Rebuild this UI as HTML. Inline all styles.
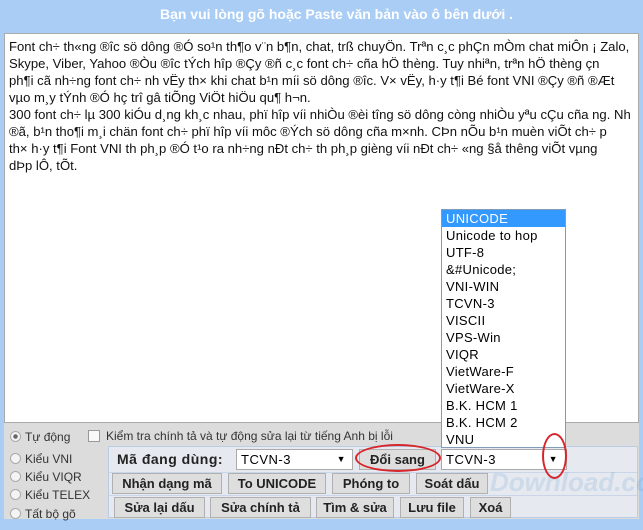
<!DOCTYPE html>
<html><head><meta charset="utf-8"><style>
*{box-sizing:border-box;margin:0;padding:0}
body{width:643px;height:530px;background:#a9cdf5;font-family:"Liberation Sans",Tahoma,sans-serif;position:relative;overflow:hidden}
.hdr{position:absolute;left:0;top:6px;width:643px;text-align:center;color:#fff;font-weight:bold;font-size:14px;padding-left:30px}
.ta{position:absolute;left:4px;top:33px;width:635px;height:390px;background:#fff;border:1px solid #aaa;font-size:13.1px;line-height:17px;padding:4px 4px;color:#111;white-space:nowrap;overflow:hidden}
.gray{position:absolute;left:4px;top:423px;width:635px;height:96px;background:#dcdcdc}
.r{position:absolute;font-size:12px;color:#333}
.rad{display:inline-block;width:11px;height:11px;border:1px solid #aaa;border-radius:50%;background:#f4f4f4;vertical-align:-1px;margin-right:4px}
.panel{position:absolute;left:108px;top:446px;width:530px;height:72px;background:#e6e9ef;border:1px solid #b8cce4}
.line{position:absolute;left:0;width:100%;height:1px;background:#c8d6e8}
.btn{position:absolute;height:21px;background:#dedede;border:1px solid #b0b0b0;font-weight:bold;font-size:13px;text-align:center;line-height:19px;color:#222}
.sel{position:absolute;height:21px;background:#fff;border:1px solid #aaa;font-size:13px;line-height:19px;padding-left:4px;letter-spacing:.5px}
.dd{position:absolute;left:441px;top:209px;width:125px;height:239px;background:#fff;border:1px solid #7f9db9;font-size:13px;letter-spacing:.3px}
.dd div{height:17px;line-height:17px;padding-left:4px}
.ell{position:absolute;border:2px solid #d6262c;border-radius:50%}
</style></head><body>
<div class="hdr">Bạn vui lòng gõ hoặc Paste văn bản vào ô bên dưới .</div>
<div class="ta">Font ch÷ th«ng ®îc sö dông ®Ó so¹n th¶o v¨n b¶n, chat, trß chuyÖn. Trªn c¸c phÇn mÒm chat miÔn ¡ Zalo,<br>Skype, Viber, Yahoo ®Òu ®îc tÝch hîp ®Çy ®ñ c¸c font ch÷ cña hÖ thèng. Tuy nhiªn, trªn hÖ thèng çn<br>ph¶i cã nh÷ng font ch÷ nh vËy th× khi chat b¹n míi sö dông ®îc. V× vËy, h·y t¶i Bé font VNI ®Çy ®ñ ®Æt<br>vµo m¸y tÝnh ®Ó hç trî gâ tiÕng ViÖt hiÖu qu¶ h¬n.<br>300 font ch÷ lµ 300 kiÓu d¸ng kh¸c nhau, phï hîp víi nhiÒu ®èi tîng sö dông còng nhiÒu yªu cÇu cña ng. Nh<br>®ã, b¹n tho¶i m¸i chän font ch÷ phï hîp víi môc ®Ých sö dông cña m×nh. CÞn nÕu b¹n muèn viÕt ch÷ p<br>th× h·y t¶i Font VNI th ph¸p ®Ó t¹o ra nh÷ng nÐt ch÷ th ph¸p gièng víi nÐt ch÷ «ng §å thêng viÕt vµng<br>dÞp lÔ, tÕt.</div>
<div class="gray"></div>
<div class="r" style="left:10px;top:430px"><span class="rad" style="background:radial-gradient(#666 30%,#f4f4f4 40%)"></span>Tự động</div>
<div class="r" style="left:88px;top:429px"><span style="display:inline-block;width:12px;height:12px;border:1px solid #999;background:#f8f8f8;vertical-align:-2px;margin-right:6px"></span>Kiểm tra chính tả và tự động sửa lại từ tiếng Anh bị lỗi</div>
<div class="r" style="left:10px;top:452px"><span class="rad"></span>Kiểu VNI</div>
<div class="r" style="left:10px;top:470px"><span class="rad"></span>Kiểu VIQR</div>
<div class="r" style="left:10px;top:488px"><span class="rad"></span>Kiểu TELEX</div>
<div class="r" style="left:10px;top:507px"><span class="rad"></span>Tất bộ gõ</div>
<div class="panel">
<div class="line" style="top:25px"></div><div class="line" style="top:48px"></div>
</div>
<div style="position:absolute;left:490px;top:467px;font:bold italic 26px 'Liberation Sans',sans-serif;color:rgba(90,150,210,.18)">Download.com.vn</div>
<div class="r" style="left:117px;top:451px;font-weight:bold;font-size:14px;color:#222;letter-spacing:.5px">Mã đang dùng:</div>
<div class="sel" style="left:236px;top:449px;width:117px">TCVN-3<span style="position:absolute;right:6px;font-size:9px">▼</span></div>
<div class="btn" style="left:359px;top:449px;width:77px">Đổi sang</div>
<div class="sel" style="left:441px;top:449px;width:126px">TCVN-3<span style="position:absolute;right:8px;font-size:9px">▼</span></div>
<div class="btn" style="left:112px;top:473px;width:110px">Nhận dạng mã</div>
<div class="btn" style="left:228px;top:473px;width:98px">To UNICODE</div>
<div class="btn" style="left:332px;top:473px;width:78px">Phóng to</div>
<div class="btn" style="left:416px;top:473px;width:72px">Soát dấu</div>
<div class="btn" style="left:114px;top:497px;width:91px">Sửa lại dấu</div>
<div class="btn" style="left:210px;top:497px;width:101px">Sửa chính tả</div>
<div class="btn" style="left:316px;top:497px;width:78px">Tìm &amp; sửa</div>
<div class="btn" style="left:400px;top:497px;width:64px">Lưu file</div>
<div class="btn" style="left:470px;top:497px;width:41px">Xoá</div>
<div class="dd">
<div style="background:#3399ff;color:#fff">UNICODE</div><div>Unicode to hop</div><div>UTF-8</div><div>&amp;#Unicode;</div><div>VNI-WIN</div><div>TCVN-3</div><div>VISCII</div><div>VPS-Win</div><div>VIQR</div><div>VietWare-F</div><div>VietWare-X</div><div>B.K. HCM 1</div><div>B.K. HCM 2</div><div>VNU</div>
</div>
<div class="ell" style="left:355px;top:444px;width:86px;height:28px"></div>
<div class="ell" style="left:542px;top:433px;width:25px;height:46px"></div>
</body></html>
